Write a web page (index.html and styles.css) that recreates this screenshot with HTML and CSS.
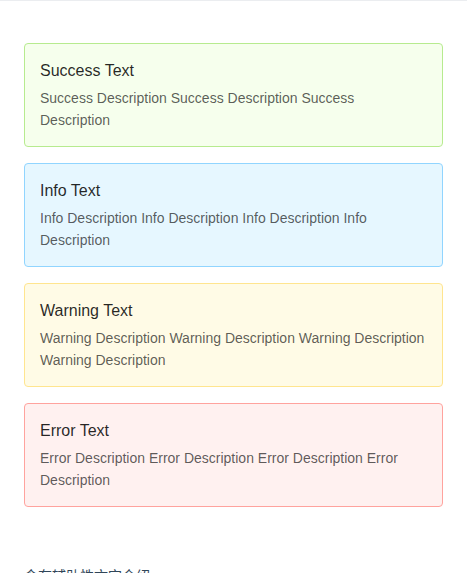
FILE: index.html
```html
<!DOCTYPE html>
<html lang="zh">
<head>
<meta charset="utf-8">
<link rel="stylesheet" href="styles.css">
</head>
<body>
<div class="frame">
  <div class="stack">
    <div class="alert alert-success">
      <div class="alert-title">Success Text</div>
      <div class="alert-desc">Success Description Success Description Success Description</div>
    </div>
    <div class="alert alert-info">
      <div class="alert-title">Info Text</div>
      <div class="alert-desc">Info Description Info Description Info Description Info Description</div>
    </div>
    <div class="alert alert-warning">
      <div class="alert-title">Warning Text</div>
      <div class="alert-desc">Warning Description Warning Description Warning Description Warning Description</div>
    </div>
    <div class="alert alert-error">
      <div class="alert-title">Error Text</div>
      <div class="alert-desc">Error Description Error Description Error Description Error Description</div>
    </div>
  </div>
  <p class="caption">含有辅助性文字介绍 。</p>
</div>
</body>
</html>
```
FILE: styles.css
```css
html, body {
  margin: 0;
  padding: 0;
  background: #fff;
}
body {
  font-family: "Liberation Sans", Arial, "Noto Sans CJK SC", sans-serif;
  font-size: 14px;
  line-height: 1.5;
}
.frame {
  border-top: 1px solid #ebedf0;
  padding: 42px 24px 0;
}
.stack {
  display: flex;
  flex-direction: column;
  gap: 16px;
}
.alert {
  border: 1px solid;
  border-radius: 4px;
  padding: 15px;
}
.alert-title {
  font-size: 16px;
  line-height: 24px;
  color: rgba(0, 0, 0, 0.85);
  margin-bottom: 4px;
}
.alert-desc {
  font-size: 14px;
  line-height: 22px;
  color: rgba(0, 0, 0, 0.65);
}
.alert-success { background: #f6ffed; border-color: #b7eb8f; }
.alert-info { background: #e6f7ff; border-color: #91d5ff; }
.alert-warning { background: #fffbe6; border-color: #ffe58f; }
.alert-error { background: #fff1f0; border-color: #ffa39e; }
.caption {
  margin: 57px 0 0;
  font-family: "Noto Sans CJK SC", sans-serif;
  font-size: 14px;
  line-height: 22px;
  color: #314659;
}
```
